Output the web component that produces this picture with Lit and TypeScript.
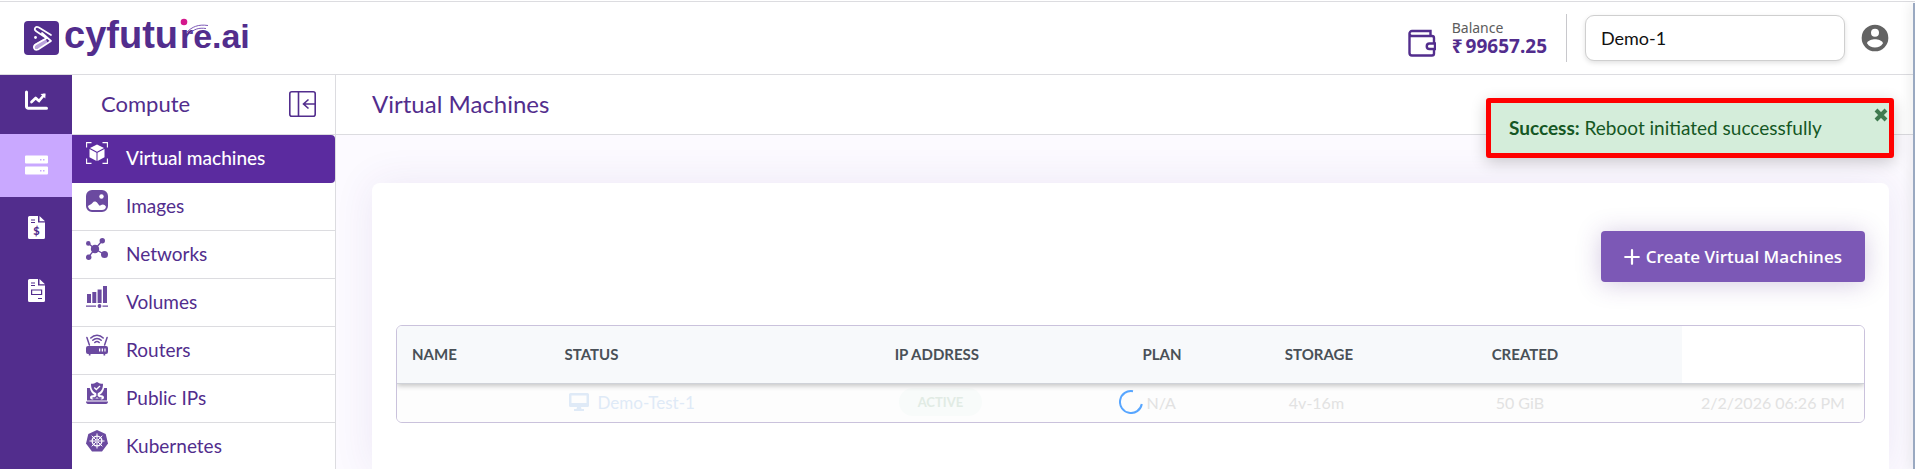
import { LitElement, html, svg, css } from "lit";
import { customElement, state } from "lit/decorators.js";

const svgIcon = (name: string, size: number, body: unknown, box = "0 0 24 24") =>
  html`<svg class="icon ${name}" width=${size} height=${size} viewBox=${box} fill="currentColor" aria-hidden="true">${body}</svg>`;

const icons = {
  cube: svg`<path fill="none" stroke="currentColor" stroke-width="1.1" d="M.6 5.5V.6h4.9M16.5.6h4.9v4.9M21.4 16.5v4.9h-4.9M5.5 21.4H.6v-4.9"/>
    <path d="M11 2.6l7 3.4-7 3.7L4 6z"/><path d="M3.500 7l7 3.700v8.400l-7-3.800zM18.500 7l-7 3.700v8.400l7-3.800z"/>`,
  image: svg`<path fill-rule="evenodd" d="M6 0h10a6 6 0 0 1 6 6v10a6 6 0 0 1-6 6H6a6 6 0 0 1-6-6V6a6 6 0 0 1 6-6zM2 16c.4 2.600 2 4 4 4h10c2.200 0 3.600-1 4-3.200-1.400-2.400-3.200-3-5-1.700-1 .8-1.500.7-2.100-.1l-1.500-1.900c-1.500-2-3.600-2-5-.1C4.800 15 4.600 14 2 16z"/><circle cx="15.500" cy="6.500" r="2.200" fill="#fff"/>`,
  network: svg`<path stroke="currentColor" stroke-width="1.300" d="M9 11L2.500 5.500M9 11l7-8M9 11l-6.500 8M9 11l9.500 5.500"/><circle cx="9" cy="11" r="4.200"/><circle cx="2.300" cy="5.400" r="2.300"/><circle cx="16.300" cy="2.800" r="2.700"/><circle cx="2.700" cy="19.300" r="2.700"/><circle cx="18.500" cy="16.500" r="3.500"/>`,
  volume: svg`<path d="M1 8h4v9H1zM6.300 6h4v11h-4zM11.600 3.500h4V17h-4zM17 0h4v17h-4zM0 19.500h10v1.300H0zM16.500 19.500H22v1.300h-5.500z"/><circle cx="13.500" cy="20" r="1.900"/>`,
  router: svg`<path fill="none" stroke="currentColor" stroke-width="1.500" stroke-linecap="round" d="M.9 3.500l2.500 7.500M21.100 3.500L18.600 11M4.800 4c3.500-3.800 8.900-3.800 12.400 0M6.800 6.300c2.400-2.400 6-2.400 8.400 0M8.800 8.500c1.300-1.200 3.100-1.200 4.400 0"/><path fill-rule="evenodd" d="M2 12h18a2 2 0 0 1 2 2v4a2 2 0 0 1-2 2h-.8v1.500h-1.700V20h-13v1.500H2.800V20H2a2 2 0 0 1-2-2v-4a2 2 0 0 1 2-2zm11 2.500v3h1.300v-3zm2.700 0v3H17v-3zm2.700 0v3h1.200v-3z"/>`,
  publicIp: svg`<path fill-rule="evenodd" d="M1 6h2.800c.8 3.500 2.200 5.500 4.700 7-2.500.3-4.500.5-4.500 2.500s3 2.800 4 1h6c1 1.800 4 1 4-1s-2-2.200-4.500-2.500c2.500-1.500 3.900-3.500 4.700-7H21v12.500H1z"/><path d="M0 19.500h22c0 1.500-.8 2.500-2 2.500H2c-1.200 0-2-1-2-2.500z"/><path d="M11 0c2 1.300 3.700 1.800 6 1.800 0 4.600-1.400 8-6 9.900C6.400 9.800 5 6.400 5 1.800 7.300 1.800 9 1.300 11 0z"/><path fill="none" stroke="currentColor" stroke-width="1.300" d="M11 11v4M6.500 16h2.500l2-1.800 2 1.800h2.500"/><path fill="none" stroke="#fff" stroke-width="1.300" d="M8.300 5.500l2 2L14 4"/>`,
  kubernetes: svg`<path d="M11 0l8.700 4.100L22 13.500 16 21.500H6L0 13.500 2.300 4.100z"/><g fill="none" stroke="#fff"><circle cx="11" cy="11" r="4.900" stroke-width="1.300"/><path stroke-width="1" d="M11 3.500v15M3.500 11h15M5.700 5.700l10.600 10.600M16.300 5.700L5.700 16.300"/></g><circle cx="11" cy="11" r="1.400" fill="#fff"/><circle cx="11" cy="11" r=".7"/>`,
  chart: svg`<path fill="none" stroke="currentColor" stroke-width="3" stroke-linecap="round" stroke-linejoin="round" d="M1.500 1.500v14.500a1.800 1.800 0 0 0 1.800 1.800h18.200"/><path fill="none" stroke="currentColor" stroke-width="2.700" stroke-linecap="round" stroke-linejoin="round" d="M6.500 11.500l4.200-4 3.300 3 5-6"/><path d="M15.500 3.500l5-.5-.2 5z"/>`,
  server: svg`<path d="M1 1h21a1 1 0 0 1 1 1v6a1 1 0 0 1-1 1H1a1 1 0 0 1-1-1V2a1 1 0 0 1 1-1zM1 12h21a1 1 0 0 1 1 1v6a1 1 0 0 1-1 1H1a1 1 0 0 1-1-1v-6a1 1 0 0 1 1-1z"/><path fill="#c9a8ff" d="M15 4.500h1.500V6H15zM18 4.500h1.500V6H18zM15 15.500h1.500V17H15zM18 15.500h1.500V17H18z"/>`,
};

const navItems = [
  { label: "Virtual machines", icon: "cube" },
  { label: "Images", icon: "image" },
  { label: "Networks", icon: "network" },
  { label: "Volumes", icon: "volume" },
  { label: "Routers", icon: "router" },
  { label: "Public IPs", icon: "publicIp" },
  { label: "Kubernetes", icon: "kubernetes" },
] as const;

@customElement("app-root")
export class AppRoot extends LitElement {
  @state() private toastOpen = true;

  static styles = css`
    :host {
      display: flex;
      flex-direction: column;
      min-height: 100vh;
      box-sizing: border-box;
      border-top: 1px solid #fff;
      font-family: Lato, "Liberation Sans", sans-serif;
      color: #522d8d;
      background: #fff;
      position: relative;
      overflow: hidden;
    }
    * { box-sizing: border-box; }
    svg { display: block; flex: none; }
    a { color: inherit; text-decoration: none; }
    button { font: inherit; border: 0; cursor: pointer; }
    .topbar {
      display: flex;
      align-items: center;
      height: 74px;
      padding: 0 24px;
      border-top: 1px solid #dcdce0;
      border-bottom: 1px solid #dcdce0;
    }
    .brand { margin-right: auto; }
    .wallet { margin: 10px 16px 0 0; }
    .balance { font-family: "Noto Sans", sans-serif; font-size: 14px; line-height: 16px; color: #5c5c5c; padding-right: 19px; }
    .amount { display: flex; gap: 3px; font-size: 19px; font-weight: 700; line-height: 20px; color: #522d8d; }
    .split { width: 1px; height: 48px; background: #c8c8cc; margin-right: 18px; }
    .project {
      width: 260px; height: 46px; padding: 0 15px; appearance: none;
      font: 400 18px Lato, sans-serif; color: #111; background: #fff;
      border: 1px solid #cfcfcf; border-radius: 9px;
      box-shadow: 0 2px 5px rgba(0, 0, 0, 0.12);
    }
    .account { padding: 0; background: none; color: #636363; margin-left: 14px; }
    .shell { flex: 1; display: flex; min-height: 394px; }
    .rail { width: 72px; flex: none; background: #522d8d; color: #fff; }
    .rail a { display: flex; justify-content: center; align-items: center; height: 63px; padding-bottom: 2px; }
    .rail a.first { height: 59px; padding-bottom: 9px; }
    .rail a.active { background: #c9a8ff; }
    .side { width: 264px; flex: none; border-right: 1px solid #dcdce0; }
    .side-head { display: flex; justify-content: space-between; align-items: center; height: 60px; padding: 0 19px 1px 29px; border-bottom: 1px solid #dcdce0; }
    h1, h2 { margin: 0; font-weight: 400; }
    h2 { font-size: 22px; line-height: 28px; }
    h1 { font-size: 24px; line-height: 30px; }
    .collapse { padding: 0; color: inherit; background: none; }
    .nav a {
      display: flex; align-items: flex-start; gap: 18px; height: 48px;
      padding: 7px 14px; font-size: 19px; border-bottom: 1px solid #dcdce0;
    }
    .nav span { line-height: 32px; }
    .nav svg { color: #6b4aa0; }
    .nav a.active { background: #5b2b9f; color: #fff; border: 0; border-radius: 0 4px 4px 0; font-weight: 500; }
    .nav a.active svg { color: #fff; }
    .main { flex: 1; min-width: 0; display: flex; flex-direction: column; background: #fcfaff; }
    .main-head { display: flex; align-items: center; height: 60px; padding: 0 36px 2px; background: #fff; border-bottom: 1px solid #dcdce0; }
    .content { flex: 1; display: flex; padding: 48px 26px 0 36px; }
    .card { flex: 1; min-width: 0; padding: 48px 24px; background: #fff; border-radius: 8px 8px 0 0; box-shadow: 0 0 40px rgba(82, 45, 141, 0.09); }
    .create {
      display: flex; align-items: center; gap: 6px; height: 51px; margin: 0 0 43px auto; padding: 0 23px;
      font: 600 17px "Open Sans", sans-serif; color: #fff; background: #7c58b6;
      border-radius: 4px; box-shadow: 0 2px 24px rgba(82, 45, 141, 0.25);
    }
    .frame { border: 1px solid #cac2dc; border-radius: 6px; overflow: hidden; position: relative; }
    table { width: 100%; table-layout: fixed; border-collapse: separate; border-spacing: 0; text-align: left; }
    thead { position: relative; z-index: 1; box-shadow: 0 2px 5px rgba(0, 0, 0, 0.22); }
    th { height: 58px; padding: 0 15px 2px; background: #f7f9fb; color: #495057; font-size: 15px; font-weight: 700; white-space: nowrap; border-bottom: 1px solid #cfd2d8; }
    th.blank { background: #fff; }
    td { height: 38px; padding: 0 0 2px 19px; font-size: 16px; color: #e2e2e2; background: #fdfdfd; white-space: nowrap; }
    .vm { display: flex; align-items: center; gap: 9px; font-size: 17px; color: #dfeaf7; }
    .pill { display: inline-block; padding: 0 19px; line-height: 28px; border-radius: 14px; font-size: 13px; font-weight: 700; background: #f8fbfa; color: #e1ebe4; }
    .spinner { position: absolute; left: 50%; top: 50%; margin: 16px 0 0 -12px; color: #58a6ff; z-index: 2; }
    .toast {
      position: absolute; top: 97px; right: 21px; width: 408px; height: 60px; padding: 0 18px 2px;
      display: flex; align-items: center; border: 5px solid #f00; border-radius: 3px;
      background: #d4edda; color: #155724; font-size: 19px; white-space: pre;
      box-shadow: 0 4px 16px rgba(0, 0, 0, 0.2);
    }
    .close { position: absolute; top: 5px; right: 1px; padding: 0; background: none; color: #3f7a4f; }
    .edge { position: absolute; top: 2px; right: 0; bottom: 0; width: 2px; background: #9aa9c1; box-shadow: 0 0 12px rgba(0, 0, 0, 0.3); }
  `;

  private logo() {
    return html`<svg width="228" height="46" viewBox="0 0 228 46" role="img" aria-label="cyfuture.ai">
      <rect x="0" y="6" width="35" height="34" rx="4" fill="#522d8d"/>
      <path d="M13 31l7-4" stroke="#b9a2dc" stroke-width="6" stroke-linecap="round"/>
      <g fill="none" stroke="#fff" stroke-width="1.700" stroke-linejoin="round" stroke-linecap="round">
        <path d="M27 20L14.500 12.300c-3.500-1.300-5 2-2.300 3.900l9.300 6.300M18 18l9 8-13 8.500c-4 1.500-5.500-3-2.500-5l11.500-6.500"/>
      </g>
      <circle cx="11.500" cy="22.500" r="1.400" fill="#fff"/>
      <g font-family="Liberation Sans, sans-serif" font-weight="700" fill="#522d8d">
        <text x="40" y="33" font-size="38">cyfutu</text>
        <text x="156" y="33" font-size="34">re</text>
        <text x="188" y="33" font-size="34">.ai</text>
      </g>
      <circle cx="160" cy="7" r="3.300" fill="#d4188c"/>
      <path d="M163 17c5-5 11-8 21-6.500M165 19c5-5 10-6.500 17-5.500" fill="none" stroke="#7c58b6" stroke-width="1"/>
    </svg>`;
  }

  render() {
    return html`
      <header class="topbar">
        <a class="brand" href="#">${this.logo()}</a>
        <svg class="wallet" width="28" height="28" viewBox="0 0 28 28" fill="none" stroke="#522d8d" stroke-width="2.400" aria-hidden="true"><path d="M4 2h18.500v4.500M4 2a2.500 2.500 0 0 0 0 5h20a2 2 0 0 1 2 2v5.500M1.500 4.500V24A2.500 2.500 0 0 0 4 26.500h20a2 2 0 0 0 2-2V20M27 14.500h-5.500a2.700 2.700 0 0 0 0 5.500H27z"/></svg>
        <div class="balance"><div>Balance</div><div class="amount"><span>₹</span><span>99657.25</span></div></div>
        <div class="split"></div>
        <select class="project" aria-label="Project"><option>Demo-1</option></select>
        <button class="account" aria-label="Account">${svgIcon("", 32, svg`<path d="M12 2a10 10 0 1 0 0 20 10 10 0 0 0 0-20zm0 3a3 3 0 1 1 0 6 3 3 0 0 1 0-6zm0 14.200a7.200 7.200 0 0 1-6-3.220c.03-1.990 4-3.080 6-3.080 1.990 0 5.970 1.090 6 3.080a7.200 7.200 0 0 1-6 3.220z"/>`)}</button>
      </header>
      <div class="shell">
        <nav class="rail" aria-label="Sections">
          <a class="first" href="#" aria-label="Dashboard">${svgIcon("", 23, icons.chart, "0 0 23 20")}</a>
          <a class="active" href="#" aria-label="Compute">${svgIcon("", 23, icons.server, "0 0 23 20")}</a>
          <a href="#" aria-label="Billing"><svg width="17" height="23" viewBox="0 0 17 23"><path fill="#fff" d="M1.500 0H10v6.500h7V21.500a1.500 1.500 0 0 1-1.500 1.500h-14A1.500 1.500 0 0 1 0 21.500v-20A1.500 1.500 0 0 1 1.500 0zM11.500 0L17 5.300h-5.500z"/><path stroke="#522d8d" stroke-width="1.200" d="M3 4h4M3 6.500h4"/><text x="8.500" y="19" text-anchor="middle" font-family="Lato" font-size="11" font-weight="900" fill="#522d8d">$</text></svg></a>
          <a href="#" aria-label="Invoices"><svg width="17" height="23" viewBox="0 0 17 23"><path fill="#fff" d="M1.500 0H10v6.500h7V21.500a1.500 1.500 0 0 1-1.500 1.500h-14A1.500 1.500 0 0 1 0 21.500v-20A1.500 1.500 0 0 1 1.500 0zM11.500 0L17 5.300h-5.500z"/><path fill="none" stroke="#522d8d" stroke-width="1.200" d="M3 4h4M3 6.500h4M3.600 11h10v4.500h-10zM10 19.500h4"/></svg></a>
        </nav>
        <aside class="side">
          <div class="side-head">
            <h2>Compute</h2>
            <button class="collapse" aria-label="Collapse menu"><svg width="27" height="26" viewBox="0 0 27 26" fill="none" stroke="currentColor" stroke-width="1.600"><rect x=".8" y=".8" width="25.400" height="24.400" rx="2"/><path d="M9.500 1v24M26 13H14.500M19.500 8.500L14.500 13l5 4.500"/></svg></button>
          </div>
          <nav class="nav" aria-label="Compute">
            ${navItems.map((n, i) => html`<a href="#" class=${i === 0 ? "active" : ""}>${svgIcon("", 22, icons[n.icon], "0 0 22 22")}<span>${n.label}</span></a>`)}
          </nav>
        </aside>
        <main class="main">
          <div class="main-head"><h1>Virtual Machines</h1></div>
          <div class="content">
            <section class="card">
              <button class="create"><svg width="16" height="16" viewBox="0 0 16 16" stroke="#fff" stroke-width="2.200" stroke-linecap="round" aria-hidden="true"><path d="M8 1.200v13.600M1.200 8h13.600"/></svg>Create Virtual Machines</button>
              <div class="frame">
                <table>
                  <colgroup><col style="width:10.4%"><col style="width:22.5%"><col style="width:16.9%"><col style="width:9.7%"><col style="width:14.1%"><col style="width:14%"><col></colgroup>
                  <thead><tr><th>NAME</th><th>STATUS</th><th>IP ADDRESS</th><th>PLAN</th><th>STORAGE</th><th>CREATED</th><th class="blank"></th></tr></thead>
                  <tbody><tr>
                    <td></td>
                    <td><div class="vm"><svg width="20" height="18" viewBox="0 0 20 18" aria-hidden="true"><path fill="currentColor" fill-rule="evenodd" d="M1.500 0h17A1.500 1.500 0 0 1 20 1.500v11a1.500 1.500 0 0 1-1.500 1.500H12l.5 2H15v2H5v-2h2.500l.5-2H1.500A1.500 1.500 0 0 1 0 12.500v-11A1.500 1.500 0 0 1 1.500 0zM2.500 2.500v7.500h15V2.500z"/></svg>Demo-Test-1</div></td>
                    <td><span class="pill">ACTIVE</span></td>
                    <td>N/A</td><td>4v-16m</td><td>50 GiB</td><td>2/2/2026 06:26 PM</td>
                  </tr></tbody>
                </table>
                <svg class="spinner" width="24" height="24" viewBox="0 0 24 24" fill="none" stroke="currentColor" stroke-width="2" aria-hidden="true"><path d="M14 1.200A11 11 0 1 0 22.800 14"/></svg>
              </div>
            </section>
          </div>
        </main>
      </div>
      <div class="edge"></div>
      ${this.toastOpen ? html`<div class="toast" role="alert"><span><strong>Success:</strong> Reboot initiated successfully</span>
        <button class="close" aria-label="Close" @click=${() => (this.toastOpen = false)}><svg width="14" height="14" viewBox="0 0 14 14" stroke="currentColor" stroke-width="4"><path d="M2 2l10 10M12 2L2 12"/></svg></button></div>` : ""}
    `;
  }
}
